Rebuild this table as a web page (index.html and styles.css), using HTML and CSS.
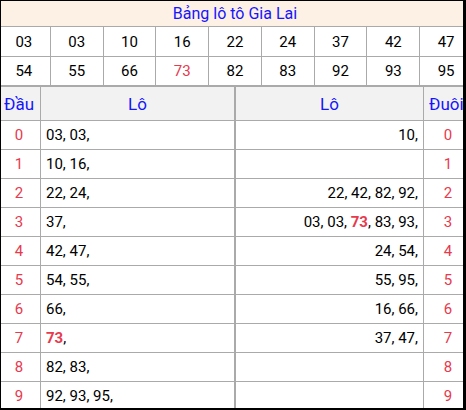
FILE: index.html
```html
<!DOCTYPE html>
<html lang="vi">
<head>
<meta charset="utf-8">
<title>Bảng lô tô Gia Lai</title>
<link rel="stylesheet" href="styles.css">
</head>
<body>
<div class="frame">
  <div class="board">
    <div class="title">Bảng lô tô Gia Lai</div>
    <div class="nums">
      <div>03</div><div>03</div><div>10</div><div>16</div><div>22</div><div>24</div><div>37</div><div>42</div><div>47</div>
      <div>54</div><div>55</div><div>66</div><div class="red">73</div><div>82</div><div>83</div><div>92</div><div>93</div><div>95</div>
    </div>
    <div class="loto">
      <div class="row head">
        <div class="c1">Đầu</div><div class="c2">Lô</div><div class="c3">Lô</div><div class="c4">Đuôi</div>
      </div>
      <div class="row"><div class="c1">0</div><div class="c2"><span>03, 03,</span></div><div class="c3"><span>10,</span></div><div class="c4">0</div></div>
      <div class="row"><div class="c1">1</div><div class="c2"><span>10, 16,</span></div><div class="c3"></div><div class="c4">1</div></div>
      <div class="row"><div class="c1">2</div><div class="c2"><span>22, 24,</span></div><div class="c3"><span>22, 42, 82, 92,</span></div><div class="c4">2</div></div>
      <div class="row"><div class="c1">3</div><div class="c2"><span>37,</span></div><div class="c3"><span>03, 03, <b>73</b>, 83, 93,</span></div><div class="c4">3</div></div>
      <div class="row"><div class="c1">4</div><div class="c2"><span>42, 47,</span></div><div class="c3"><span>24, 54,</span></div><div class="c4">4</div></div>
      <div class="row"><div class="c1">5</div><div class="c2"><span>54, 55,</span></div><div class="c3"><span>55, 95,</span></div><div class="c4">5</div></div>
      <div class="row"><div class="c1">6</div><div class="c2"><span>66,</span></div><div class="c3"><span>16, 66,</span></div><div class="c4">6</div></div>
      <div class="row"><div class="c1">7</div><div class="c2"><span><b>73</b>,</span></div><div class="c3"><span>37, 47,</span></div><div class="c4">7</div></div>
      <div class="row"><div class="c1">8</div><div class="c2"><span>82, 83,</span></div><div class="c3"></div><div class="c4">8</div></div>
      <div class="row"><div class="c1">9</div><div class="c2"><span>92, 93, 95,</span></div><div class="c3"></div><div class="c4">9</div></div>
    </div>
  </div>
</div>
</body>
</html>
```

FILE: styles.css
```css
* { box-sizing: border-box; }
html, body { margin: 0; padding: 0; background: #fff; }
body { font-family: Roboto, "Liberation Sans", Arial, sans-serif; color: #000; }

.frame {
  width: 466px;
  height: 410px;
  border-style: solid;
  border-color: #000;
  border-width: 1px 3px 2px 1px;
  overflow: hidden;
}

.board {
  width: 474px;
  margin-left: -3px;
}

.title {
  height: 26px;
  line-height: 25px;
  border-bottom: 1px solid #aaa;
  background: #fdf1e6;
  color: #1515ff;
  font-size: 16px;
  text-align: center;
}

.nums {
  display: grid;
  grid-template-columns: repeat(9, 1fr);
  grid-template-rows: 29px 28px;
  gap: 1px;
  background: #aaa;
  border-bottom: 2px solid #aaa;
}
.nums > div {
  background: #fff;
  font-size: 15px;
  display: flex;
  align-items: center;
  justify-content: center;
}
.nums > .red { color: #e8394d; }

.loto { font-size: 15px; }
.row {
  display: grid;
  grid-template-columns: 43px 195px 188px 48px;
  height: 29px;
  border-bottom: 1px solid #aaa;
}
.row > div {
  display: flex;
  align-items: center;
  white-space: nowrap;
}
.c1, .c3 { border-right: 1px solid #aaa; }
.c2 { border-right: 2px solid #aaa; padding-left: 5px; }
.c3 { justify-content: flex-end; padding-right: 5px; }
.c1, .c4 { justify-content: center; color: #e8394d; }
.row b { color: #e8394d; font-weight: 700; }

.row.head {
  height: 34px;
  background: #f2f2f2;
}
.row.head > div {
  color: #1515ff;
  font-size: 17px;
  justify-content: center;
  padding: 0;
}
.row.head > .c4 { justify-content: flex-start; padding-left: 5px; }
```
